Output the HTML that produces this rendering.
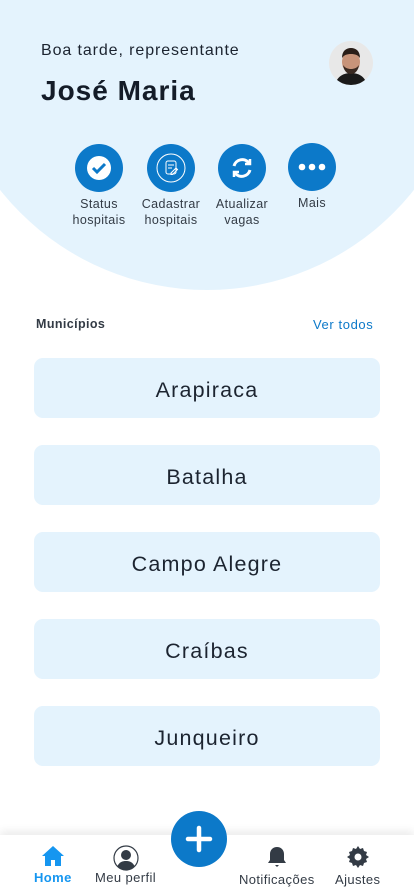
<!DOCTYPE html>
<html><head><meta charset="utf-8"><style>
*{margin:0;padding:0;box-sizing:border-box}
body{width:414px;height:896px;overflow:hidden;background:#fff;font-family:"Liberation Sans",sans-serif;position:relative;color:#1c2430}
.bg{position:absolute;left:-57px;top:-238px;width:528px;height:528px;border-radius:50%;background:#e4f3fd}
.abs{position:absolute}
.act{position:absolute;top:144px;width:74px;text-align:center;font-size:12.5px;color:#333b45;line-height:16px;letter-spacing:0.4px}
.act .c{width:48px;height:48px;border-radius:50%;background:#0c79c9;margin:0 auto 4px;display:flex;align-items:center;justify-content:center}
.card{position:absolute;left:34px;width:346px;height:60px;border-radius:9px;background:#e4f3fd;display:flex;align-items:center;justify-content:center;font-size:21.5px;color:#1c2430;letter-spacing:1.2px;padding-top:4px}
.nav{position:absolute;left:0;top:835px;width:414px;height:61px;background:#fff;box-shadow:0 -4px 8px rgba(0,0,0,.08)}
.ni{position:absolute;top:10px;text-align:center;font-size:13px;color:#333b45;letter-spacing:0.4px}
</style></head><body>
<div class="bg"></div>
<div class="abs" style="left:41px;top:42px;font-size:16px;color:#1c2430;letter-spacing:0.9px">Boa tarde, representante</div>
<div class="abs" style="left:41px;top:75px;font-size:28px;font-weight:bold;color:#141c28;letter-spacing:1px">José Maria</div>
<div class="abs" style="left:329px;top:41px;width:44px;height:44px;border-radius:50%;background:#eee;overflow:hidden">
<svg width="44" height="44" viewBox="0 0 44 44"><rect width="44" height="44" fill="#e8e8e8"/><path d="M6 44c2-9 9-12 16-12s14 3 16 12z" fill="#1a1a1a"/><ellipse cx="22" cy="21" rx="9" ry="11" fill="#c8947a"/><path d="M13 17c0-7 4-10 9-10s9 3 9 10c-2-3-5-4-9-4s-7 1-9 4z" fill="#2a1e18"/><path d="M14 24c1 6 4 9 8 9s7-3 8-9c-2 3-5 4-8 4s-6-1-8-4z" fill="#3a2a22"/></svg></div>

<div class="act" style="left:62px"><div class="c"><svg width="26" height="26" viewBox="0 0 26 26"><circle cx="13" cy="13" r="12" fill="#fff"/><path d="M7 13l4 4 8-8" stroke="#0c79c9" stroke-width="3" fill="none"/></svg></div>Status<br>hospitais</div>
<div class="act" style="left:134px"><div class="c"><svg width="30" height="30" viewBox="0 0 30 30" fill="none" stroke="#fff" stroke-width="1"><circle cx="15" cy="15" r="14"/><rect x="10" y="8" width="10" height="13" rx="2"/><path d="M12 12h6M12 15h4M15 20l5-5 1.5 1.5-5 5h-1.5z"/></svg></div>Cadastrar<br>hospitais</div>
<div class="act" style="left:205px"><div class="c"><svg width="26" height="26" viewBox="0 0 26 26" fill="none" stroke="#fff" stroke-width="3"><path d="M5 11a8.5 8.5 0 0 1 15-3"/><path d="M21 15a8.5 8.5 0 0 1-15 3"/><path d="M21 4v5h-5M5 22v-5h5" stroke-width="2.5"/></svg></div>Atualizar<br>vagas</div>
<div class="act" style="left:275px;top:143px"><div class="c"><svg width="30" height="8"><circle cx="5" cy="4" r="3.3" fill="#fff"/><circle cx="15" cy="4" r="3.3" fill="#fff"/><circle cx="25" cy="4" r="3.3" fill="#fff"/></svg></div>Mais</div>

<div class="abs" style="left:36px;top:317px;font-size:12.5px;font-weight:bold;color:#333b45;letter-spacing:0.4px">Municípios</div>
<div class="abs" style="left:313px;top:317px;font-size:13px;color:#0c79c9;letter-spacing:0.6px">Ver todos</div>

<div class="card" style="top:358px">Arapiraca</div>
<div class="card" style="top:445px">Batalha</div>
<div class="card" style="top:532px">Campo Alegre</div>
<div class="card" style="top:619px">Craíbas</div>
<div class="card" style="top:706px">Junqueiro</div>

<div class="nav">
<div class="ni" style="left:34px;color:#1596f0;font-weight:bold"><svg width="24" height="22" viewBox="0 0 24 22"><path d="M12 1L1 11h3v10h6v-6h4v6h6V11h3z" fill="#1596f0"/></svg><br>Home</div>
<div class="ni" style="left:95px;top:10px"><svg width="26" height="26" viewBox="0 0 26 26"><circle cx="13" cy="13" r="12" fill="#fff" stroke="#333b45" stroke-width="1.2"/><circle cx="13" cy="10" r="5" fill="#333b45"/><path d="M4.5 21c2-4 5-5 8.5-5s6.5 1 8.5 5a11 11 0 0 1-17 0z" fill="#333b45"/></svg><br><span style="position:relative;top:-4px">Meu perfil</span></div>
<div class="ni" style="left:239px"><svg width="24" height="24" viewBox="0 0 24 24"><path d="M12 2c-4 0-7 3-7 7v6l-2 3h18l-2-3V9c0-4-3-7-7-7z" fill="#333b45"/><path d="M10 20h4l-2 2z" fill="#333b45"/></svg><br>Notificações</div>
<div class="ni" style="left:335px"><svg width="24" height="24" viewBox="0 0 24 24"><path d="M12 1l2 3 3-1 1 3 3 1-1 3 3 2-3 2 1 3-3 1-1 3-3-1-2 3-2-3-3 1-1-3-3-1 1-3-3-2 3-2-1-3 3-1 1-3 3 1z" fill="#333b45"/><circle cx="12" cy="12" r="3.5" fill="#fff"/></svg><br>Ajustes</div>
</div>
<div class="abs" style="left:171px;top:811px;width:56px;height:56px;border-radius:50%;background:#0c79c9;display:flex;align-items:center;justify-content:center"><svg width="30" height="30"><path d="M15 4v22M4 15h22" stroke="#fff" stroke-width="4.5" stroke-linecap="round"/></svg></div>
</body></html>
